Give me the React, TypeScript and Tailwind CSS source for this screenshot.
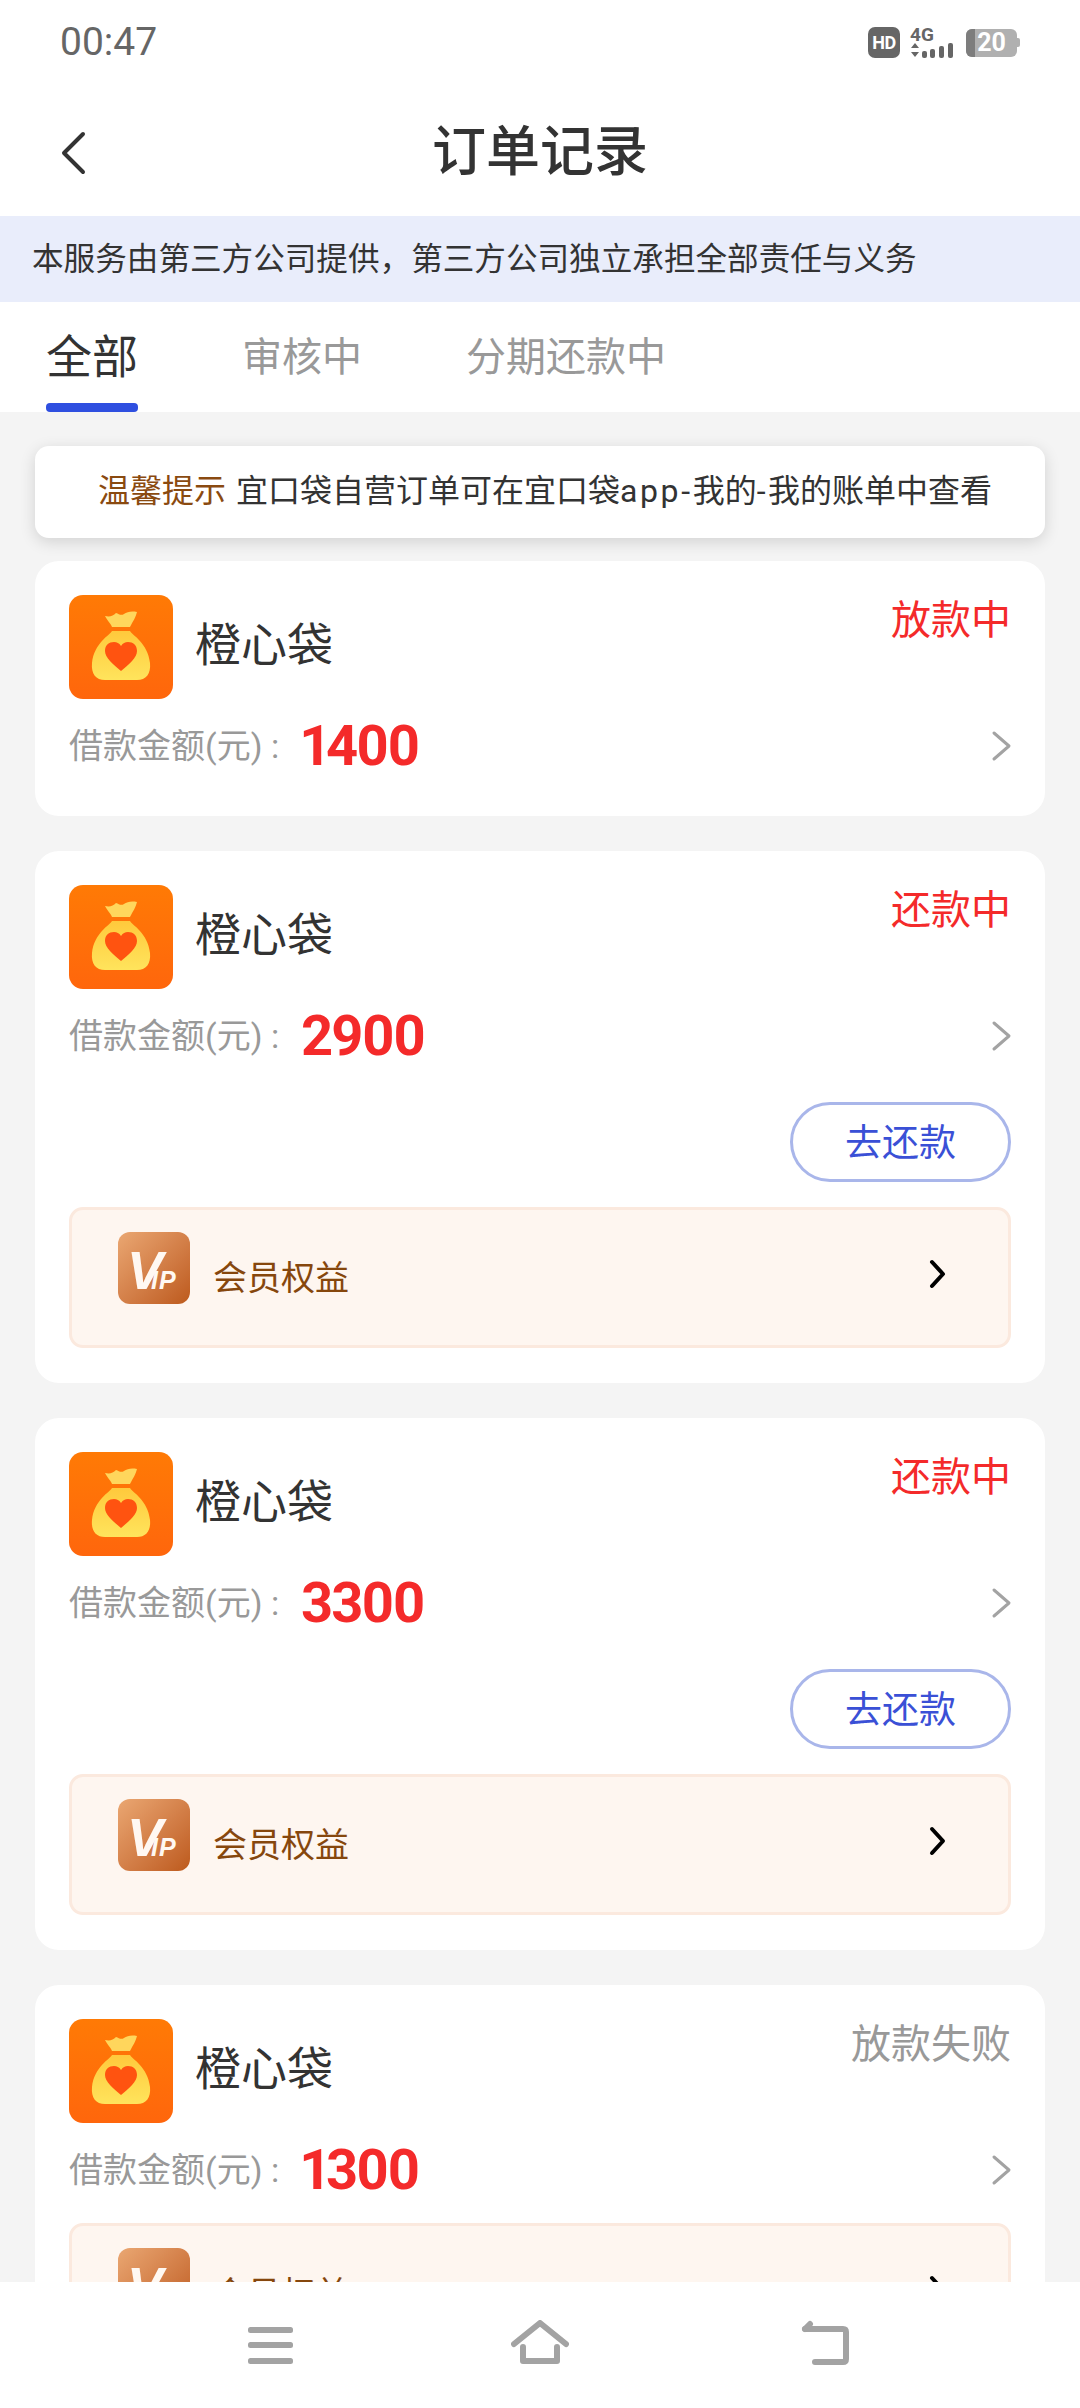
import React from "react";

type Order = {
  amount: string;
  status: string;
  failed?: boolean;
  repay?: boolean;
  vip?: boolean;
};

const orders: Order[] = [
  { amount: "1400", status: "放款中" },
  { amount: "2900", status: "还款中", repay: true, vip: true },
  { amount: "3300", status: "还款中", repay: true, vip: true },
  { amount: "1300", status: "放款失败", failed: true, vip: true },
];

const BagLogo = () => (
  <div className="w-[104px] h-[104px] shrink-0 rounded-[14px] bg-gradient-to-b from-[#ff7a05] to-[#ff660c] flex items-center justify-center">
    <svg width="104" height="104" viewBox="0 0 104 104">
      <defs>
        <linearGradient id="bag" x1="0" y1="0" x2="0" y2="1">
          <stop offset="0" stopColor="#ffc93c" />
          <stop offset="1" stopColor="#ffe45c" />
        </linearGradient>
      </defs>
      <path d="M36 21c5 1 8 0 11-3 3 1 5 3 8 1 3-2 7-3 13-2-1 5-4 9-7 15H43c-1-3-5-7-7-11z" fill="#ffd65c" />
      <path d="M43 36h18c2 4 18 12 20 32 1 11-4 17-13 17H36c-9 0-14-6-13-17 2-20 18-28 20-32z" fill="url(#bag)" />
      <path d="M52 76C44 69 36 63 36 56c0-6 4-9 9-9 3 0 5 1 7 4 2-3 4-4 7-4 5 0 9 3 9 9 0 7-8 13-16 20z" fill="#ff5310" />
    </svg>
  </div>
);

const VipLogo = () => (
  <div className="w-[72px] h-[72px] shrink-0 rounded-[12px] bg-gradient-to-br from-[#eaa772] to-[#bd5a1b] flex items-baseline pl-[9px] pt-[11px] overflow-hidden text-[#fff8f2] font-['Liberation_Sans',sans-serif] font-bold italic">
    <span className="text-[54px] leading-[54px] tracking-[-12px]">V</span>
    <span className="text-[25px] leading-[25px] tracking-[1px]">IP</span>
  </div>
);

const Chevron = ({ color = "#a3a3a3", w = 3 }: { color?: string; w?: number }) => (
  <svg width="22" height="32" viewBox="0 0 22 32" fill="none" stroke={color} strokeWidth={w} strokeLinecap="round" strokeLinejoin="round">
    <path d="M3 3l15 13L3 29" />
  </svg>
);

const OrderCard = ({ order }: { order: Order }) => (
  <div className="bg-white rounded-[24px] pt-[34px] pb-[35px] pl-[34px] pr-[34px] shrink-0">
    <div className="flex justify-between">
      <div className="flex items-center gap-[22px]">
        <BagLogo />
        <span className="text-[46px] leading-[60px] text-[#333] -mt-[4px]">橙心袋</span>
      </div>
      <span className={`text-[40px] leading-[52px] ${order.failed ? "text-[#999]" : "text-[#f42a2a]"}`}>
        {order.status}
      </span>
    </div>
    <div className="flex items-center h-[60px] mt-[17px] mb-[5px]">
      <span className="text-[34px] text-[#999] w-[232px]">借款金额(元) :</span>
      <span className="flex-1 text-[56px] font-bold text-[#f42a2a] tracking-[-2px] leading-[60px] proportional-nums font-['Roboto',sans-serif]">
        {order.amount}
      </span>
      <div className="-mr-[2px]">
        <Chevron />
      </div>
    </div>
    {order.repay && (
      <div className="flex justify-end mt-[36px]">
        <button className="w-[221px] h-[80px] pt-[4px] rounded-[40px] border-[3px] border-[#a9b6ea] text-[37px] text-[#3a50d6] bg-white">
          去还款
        </button>
      </div>
    )}
    {order.vip && (
      <div className={`${order.repay ? "mt-[25px]" : "mt-[23px]"} h-[141px] rounded-[14px] border-[3px] border-[#fbe9de] bg-[#fef6f0] flex items-start pt-[22px] pl-[46px] pr-[60px]`}>
        <VipLogo />
        <span className="ml-[23px] mt-[21px] text-[34px] leading-[50px] text-[#86470d] flex-1">会员权益</span>
        <svg className="mt-[26px]" width="20" height="32" viewBox="0 0 20 32" fill="none" stroke="#000" strokeWidth="4" strokeLinecap="round" strokeLinejoin="round">
          <path d="M4 4l11 12L4 28" />
        </svg>
      </div>
    )}
  </div>
);

export default function App() {
  return (
    <div className="relative w-[1080px] h-[2408px] overflow-hidden flex flex-col bg-[#f4f4f4] font-['Roboto','Noto_Sans_CJK_SC',sans-serif]">
      {/* status bar */}
      <div className="h-[85px] bg-white shrink-0 flex justify-between items-center pl-[60px] pr-[60px]">
        <span className="text-[39px] text-[#666]">00:47</span>
        <div className="flex items-center gap-[10px]">
          <span className="w-[32px] h-[31px] rounded-[7px] bg-[#666] text-white text-[18px] font-bold flex items-center justify-center tracking-[-0.5px]">
            HD
          </span>
          <div className="flex flex-col w-[46px] -mt-[1px]">
            <span className="text-[19px] leading-[15px] font-bold text-[#666]">4G</span>
            <svg width="46" height="16" viewBox="0 0 46 16" fill="#666">
              <path d="M5 1l4 5H1zM5 15l4-5H1z" />
              <rect x="12" y="9" width="5" height="7" rx="2" />
              <rect x="20" y="7" width="5" height="9" rx="2" />
              <rect x="29" y="4" width="5" height="12" rx="2" />
              <rect x="38" y="1" width="5" height="15" rx="2" />
            </svg>
          </div>
          <div className="flex items-center">
            <div className="relative w-[51px] h-[28px] rounded-[6px] bg-[#b0b0b0] overflow-hidden flex items-center justify-center">
              <div className="absolute left-0 top-0 bottom-0 w-[9px] bg-[#7d7d7d]" />
              <span className="relative text-[25px] leading-[28px] font-bold text-white">20</span>
            </div>
            <div className="w-[3px] h-[9px] rounded-r-[2px] bg-[#b0b0b0]" />
          </div>
        </div>
      </div>

      {/* nav */}
      <div className="h-[131px] bg-white shrink-0 flex items-center relative pt-[5px]">
        <svg className="ml-[60px]" width="26" height="44" viewBox="0 0 26 44" fill="none" stroke="#333" strokeWidth="4" strokeLinecap="round" strokeLinejoin="round">
          <path d="M23 3L4 22l19 19" />
        </svg>
        <span className="absolute left-0 right-0 text-center text-[54px] leading-[70px] font-medium text-[#333]">订单记录</span>
      </div>

      {/* notice */}
      <div className="h-[86px] bg-[#e9edfb] shrink-0 flex items-center pl-[32px] pt-[2px] text-[31.6px] text-[#333]">
        本服务由第三方公司提供，第三方公司独立承担全部责任与义务
      </div>

      {/* tabs */}
      <div className="h-[110px] bg-white shrink-0 flex pl-[46px]">
        <div className="w-[92px] flex flex-col items-center">
          <span className="h-[101px] flex items-center text-[46px] text-[#333] pt-[10px]">全部</span>
          <div className="w-[92px] h-[9px] rounded-[4px] bg-[#2f4fe0]" />
        </div>
        <span className="ml-[104px] h-[101px] flex items-center text-[40px] text-[#999] pt-[10px]">审核中</span>
        <span className="ml-[104px] h-[101px] flex items-center text-[40px] text-[#999] pt-[10px]">分期还款中</span>
      </div>

      {/* list */}
      <div className="flex flex-col pl-[35px] pr-[35px] pt-[34px]">
        <div className="h-[92px] bg-white rounded-[14px] shadow-[0_4px_16px_rgba(0,0,0,0.14)] flex items-center pl-[63px] pb-[3px] text-[32px] shrink-0 mb-[23px] relative">
          <span className="text-[#8a4a10]">温馨提示</span>
          <span className="ml-[10px] text-[#333]">
            宜口袋自营订单可在宜口袋<span className="tracking-[2.6px]">app-</span>我的<span className="tracking-[2.6px]">-</span>我的账单中查看
          </span>
        </div>
        <div className="flex flex-col gap-[35px]">
          {orders.map((order, index) => (
            <OrderCard key={index} order={order} />
          ))}
        </div>
      </div>

      {/* system nav */}
      <div className="absolute left-0 right-0 bottom-0 h-[126px] bg-white flex items-start pt-[38px] pl-[248px]">
        <svg width="45" height="38" viewBox="0 0 45 38" fill="#a3a3a3" className="mt-[7px]">
          <rect x="0" y="0" width="45" height="6" rx="2.5" />
          <rect x="0" y="15" width="45" height="6" rx="2.5" />
          <rect x="0" y="31" width="45" height="6" rx="2.5" />
        </svg>
        <svg width="58" height="45" viewBox="0 0 58 45" fill="none" stroke="#a3a3a3" strokeWidth="6" strokeLinecap="round" strokeLinejoin="round" className="ml-[218px]">
          <path d="M3 24L29 3l26 21" />
          <path d="M12 27v14h34V27" />
        </svg>
        <svg width="48" height="45" viewBox="0 0 48 45" fill="none" stroke="#a3a3a3" strokeWidth="6" strokeLinecap="round" strokeLinejoin="round" className="ml-[232px]">
          <path d="M4 9h38q3 0 3 3v27q0 3-3 3H14" />
          <path d="M9 4L4 9" />
        </svg>
      </div>
    </div>
  );
}
